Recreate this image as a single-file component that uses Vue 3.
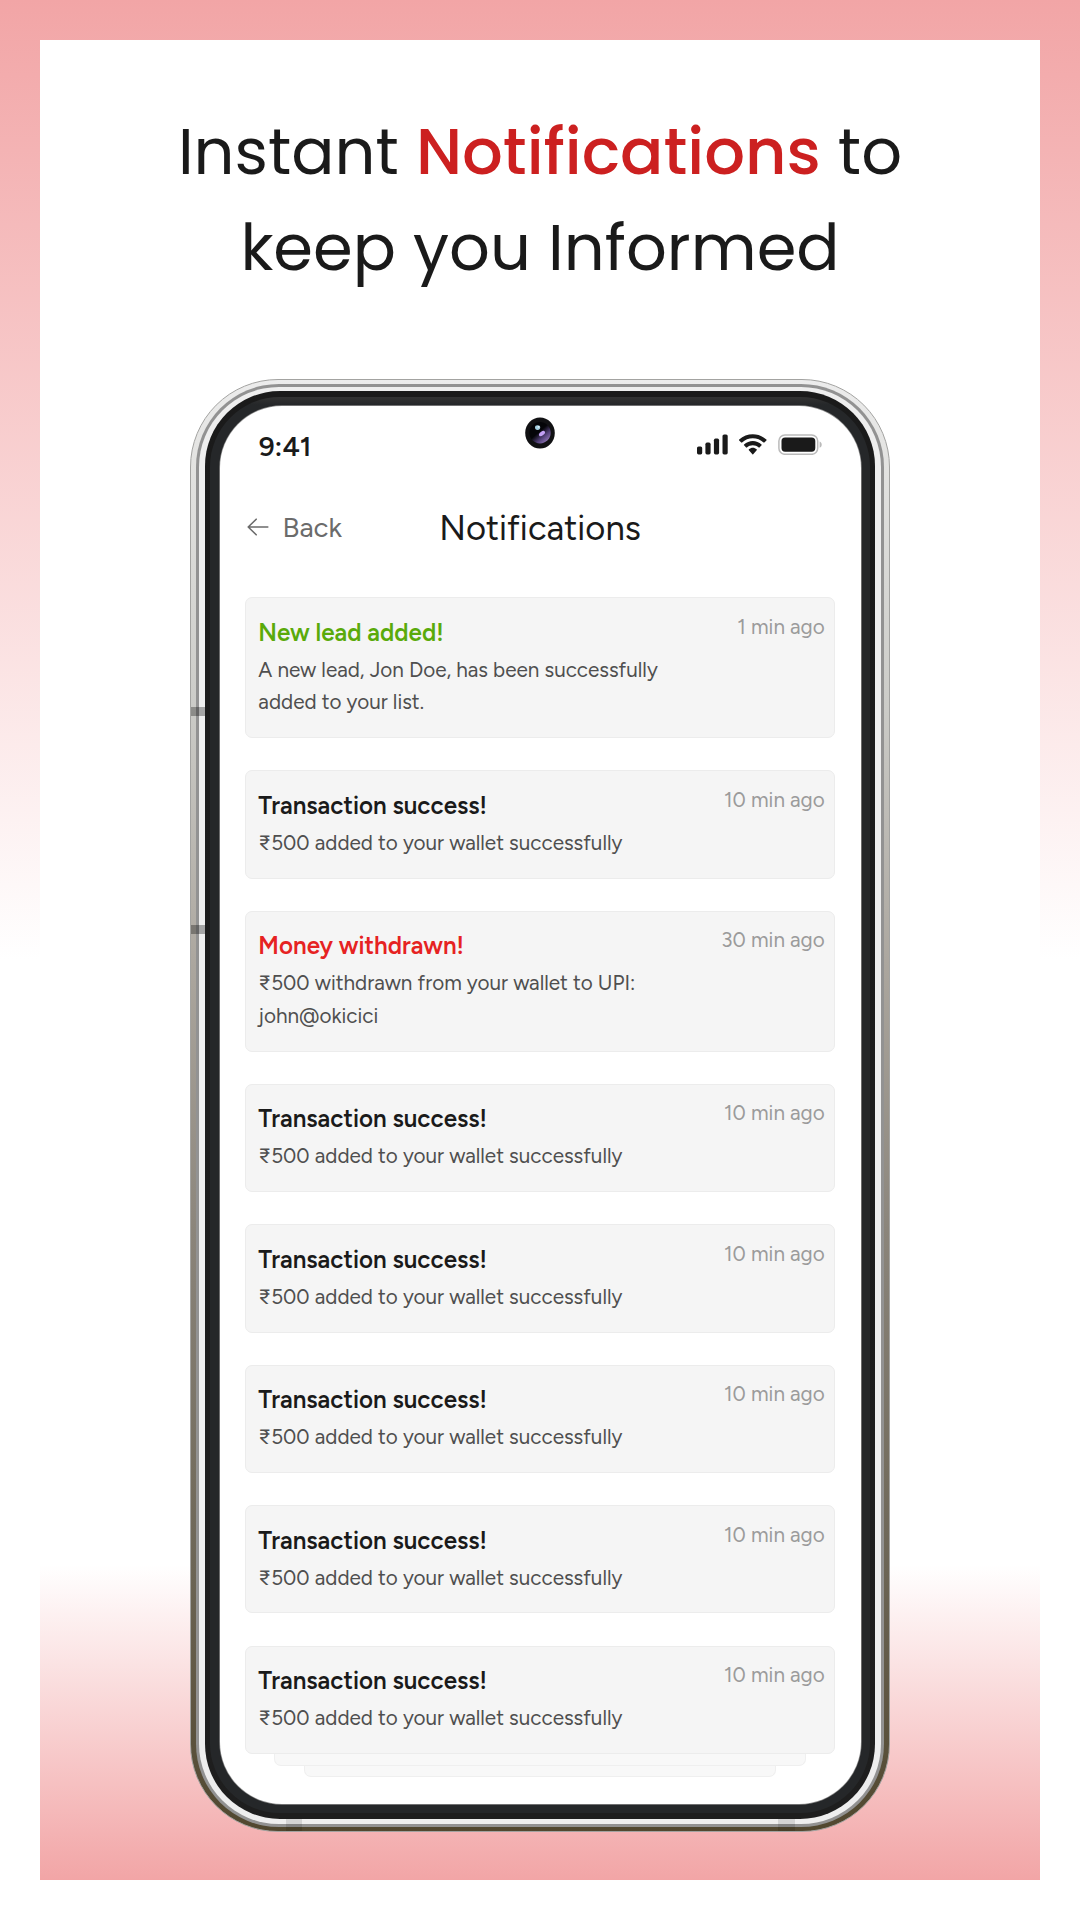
<script setup>
const success = { title: 'Transaction success!', body: '₹500 added to your wallet successfully', time: '10 min ago', tone: 'default' }

const notifications = [
  { title: 'New lead added!', body: 'A new lead, Jon Doe, has been successfully added to your list.', time: '1 min ago', tone: 'green' },
  { ...success },
  { title: 'Money withdrawn!', body: '₹500 withdrawn from your wallet to UPI: john@okicici', time: '30 min ago', tone: 'red' },
  ...Array.from({ length: 5 }, () => ({ ...success })),
]
</script>

<template>
  <div class="poster">
    <main class="panel">
      <h1 class="headline">Instant <span>Notifications</span> to<br />keep you Informed</h1>

      <div class="phone">
        <i class="band side first"></i>
        <i class="band side second"></i>
        <i class="band foot left"></i>
        <i class="band foot right"></i>
        <div class="groove">
          <div class="rail">
            <div class="bezel">
              <div class="glass">
                <div class="screen">
                  <svg class="camera" viewBox="0 0 30 32">
                    <defs>
                      <linearGradient id="lens" x1="0.2" y1="0.15" x2="0.85" y2="0.9">
                        <stop offset="0.4" stop-color="#050508" />
                        <stop offset="0.72" stop-color="#54427a" />
                        <stop offset="1" stop-color="#8f74b4" />
                      </linearGradient>
                    </defs>
                    <ellipse cx="15" cy="16" rx="14.8" ry="15.5" fill="#111113" />
                    <circle cx="15" cy="15.8" r="10.7" fill="url(#lens)" />
                    <ellipse cx="12.6" cy="10.6" rx="2.6" ry="2.4" fill="#a4d0e2" />
                    <circle cx="13.6" cy="9.8" r="0.9" fill="#eefaff" />
                    <ellipse cx="17" cy="16.6" rx="3.5" ry="1.9" transform="rotate(-38 17 16.6)" fill="#c3a0f4" />
                  </svg>

                  <div class="status">
                    <span class="clock">9:41</span>
                    <div class="indicators">
                      <svg width="31" height="21" viewBox="0 0 31 21" fill="#1a1a1a">
                        <rect x="0" y="12.4" width="5.2" height="8" rx="1.6" />
                        <rect x="8.4" y="8.6" width="5.2" height="11.8" rx="1.6" />
                        <rect x="16.9" y="4.6" width="5.2" height="15.8" rx="1.6" />
                        <rect x="25.5" y="0.4" width="5.2" height="20" rx="1.6" />
                      </svg>
                      <svg width="27.6" height="20.6" viewBox="0 -0.15 17.15 12.6" preserveAspectRatio="none" fill="#1a1a1a">
                        <path d="M8.57 2.47C11.06 2.47 13.45 3.39 15.25 5.04C15.39 5.17 15.6 5.17 15.74 5.04L17.04 3.77C17.1 3.71 17.14 3.62 17.14 3.53C17.14 3.43 17.1 3.35 17.03 3.28C12.3 -1.09 4.84 -1.09 0.11 3.28C0.04 3.35 0 3.43 0 3.53C0 3.62 0.04 3.71 0.1 3.77L1.4 5.04C1.54 5.17 1.75 5.17 1.89 5.04C3.69 3.39 6.08 2.47 8.57 2.47Z" />
                        <path d="M8.57 6.69C9.93 6.69 11.23 7.2 12.24 8.12C12.38 8.25 12.59 8.25 12.72 8.12L14.01 6.8C14.08 6.73 14.12 6.63 14.12 6.54C14.11 6.44 14.07 6.35 14.01 6.28C10.94 3.39 6.2 3.39 3.13 6.28C3.06 6.35 3.02 6.44 3.02 6.54C3.02 6.63 3.06 6.73 3.13 6.8L4.42 8.12C4.55 8.25 4.76 8.25 4.9 8.12C5.9 7.2 7.21 6.69 8.57 6.69Z" />
                        <path d="M11.09 9.48C11.09 9.59 11.06 9.69 10.99 9.76L8.81 12.22C8.75 12.29 8.66 12.33 8.57 12.33C8.48 12.33 8.39 12.29 8.33 12.22L6.15 9.76C6.09 9.69 6.05 9.59 6.05 9.48C6.05 9.37 6.09 9.28 6.16 9.21C7.55 7.9 9.59 7.9 10.98 9.21C11.05 9.28 11.09 9.37 11.09 9.48Z" />
                      </svg>
                      <svg width="44" height="21" viewBox="0 0 44 21">
                        <rect x="0.9" y="0.9" width="38.8" height="19.4" rx="6" fill="none" stroke="#bababa" stroke-width="1.5" />
                        <rect x="3.5" y="3.5" width="33.8" height="14.2" rx="3.6" fill="#1a1a1a" />
                        <path d="M41.6 7.6v6.2c1.3-.5 2.1-1.7 2.1-3.1s-.8-2.6-2.1-3.1z" fill="#bababa" />
                      </svg>
                    </div>
                  </div>

                  <header class="nav">
                    <a class="back">
                      <svg width="22" height="18" viewBox="0 0 22 18" fill="none" stroke="#6b6b6b" stroke-width="1.6" stroke-linecap="round" stroke-linejoin="round">
                        <path d="M20.8 9H1.2M9.2 1.2L1.2 9l8 7.8" />
                      </svg>
                      <span>Back</span>
                    </a>
                    <h2>Notifications</h2>
                  </header>

                  <section class="list">
                    <article v-for="(n, i) in notifications" :key="i" class="card" :class="n.tone">
                      <div class="text">
                        <h3>{{ n.title }}</h3>
                        <p>{{ n.body }}</p>
                      </div>
                      <time>{{ n.time }}</time>
                    </article>
                  </section>
                  <div class="stacked near"></div>
                  <div class="stacked far"></div>
                </div>
              </div>
            </div>
          </div>
        </div>
      </div>
    </main>
  </div>
</template>

<style>
body {
  margin: 0;
  background: #fff;
}
</style>

<style scoped>
* {
  box-sizing: border-box;
}

.poster {
  width: 1080px;
  height: 1920px;
  padding: 40px;
  overflow: hidden;
  background: linear-gradient(#f2a5a6 0, #fff 960px);
}

.panel {
  height: 1840px;
  display: flex;
  flex-direction: column;
  align-items: center;
  background: linear-gradient(#fff 1525px, #f2a5a6 1840px);
}

.headline {
  margin: 64px 0 0;
  height: 275px;
  font: 400 64px/96px Poppins, Inter, sans-serif;
  color: #1a1a1a;
  text-align: center;
  white-space: nowrap;
}

.headline span {
  font-weight: 500;
  color: #cc2020;
}

.phone {
  position: relative;
  width: 700px;
  height: 1452.5px;
  padding: 3.5px 5px;
  border: 1px solid #a3a3a1;
  border-radius: 88px;
  background: linear-gradient(#ececec 0, #e2e2e0 90px, #cbcbc7 330px, #aca79f 580px, #8b857b 850px, #6b6454 1200px, #51472f 1452px);
}

.groove {
  height: 100%;
  padding: 3px;
  border-radius: 83px;
  background: #929292;
}

.rail {
  height: 100%;
  padding: 4.5px 6px 5px;
  border-radius: 80px;
  background: #eeeeee;
}

.bezel {
  height: 100%;
  padding: 6px 5px;
  border-radius: 75px;
  background: linear-gradient(#1a1a1a, #1e1e1e);
}

.glass {
  height: 100%;
  padding: 9px 9.5px;
  border-radius: 70px;
  background: linear-gradient(#323232, #252729 8px);
}

.screen {
  position: relative;
  height: 100%;
  display: flex;
  flex-direction: column;
  align-items: center;
  border-radius: 62px;
  background: #fff;
  box-shadow: 0 0 0 0.7px #8a8a8a;
  font-family: Figtree, Inter, sans-serif;
}

.band {
  position: absolute;
  z-index: 1;
  background: rgba(0, 0, 0, 0.31);
}

.band.side {
  left: 0;
  width: 14px;
  height: 9px;
}

.band.first {
  top: 327px;
}

.band.second {
  top: 545px;
}

.band.foot {
  bottom: 0;
  width: 16.5px;
  height: 12px;
  background: rgba(0, 0, 0, 0.11);
}

.band.left {
  left: 94.5px;
}

.band.right {
  right: 94.5px;
}

.camera {
  position: absolute;
  top: 10.5px;
  left: 50%;
  width: 30px;
  height: 32px;
  margin-left: -15px;
}

.status {
  width: 100%;
  height: 72px;
  padding: 25px 38.5px 0 39.2px;
  display: flex;
  justify-content: space-between;
}

.clock {
  font-size: 27.7px;
  font-weight: 600;
  line-height: 32px;
  color: #1a1a1a;
}

.indicators {
  display: flex;
  gap: 11px;
  padding-top: 3px;
}

.nav {
  position: relative;
  width: 100%;
  height: 119.4px;
  padding-top: 30px;
}

.back {
  position: absolute;
  left: 27.5px;
  top: 28.5px;
  display: flex;
  align-items: center;
  gap: 13.5px;
  font-size: 27.7px;
  font-weight: 400;
  line-height: 40px;
  color: #6b6b6b;
}

.back span {
  padding-top: 1px;
}

.nav h2 {
  margin: 0;
  font-size: 34.6px;
  font-weight: 400;
  line-height: 40px;
  text-align: center;
  color: #1a1a1a;
}

.list {
  position: relative;
  z-index: 2;
  width: 590.5px;
  display: flex;
  flex-direction: column;
  gap: 32.4px;
}

.card {
  display: flex;
  justify-content: space-between;
  padding: 17.5px 9.5px 18.1px 12.6px;
  border: 1px solid #ececec;
  border-radius: 7px;
  background: #f5f5f5;
}

.text {
  width: 420px;
}

.card h3 {
  margin: 0 0 3.9px;
  font-size: 24.2px;
  font-weight: 600;
  line-height: 34px;
  color: #1a1a1a;
}

.card.green h3 {
  color: #5aaa0a;
}

.card.red h3 {
  color: #e62222;
}

.card p {
  margin: 0;
  font-size: 20.7px;
  line-height: 32.6px;
  color: #4f4f4f;
}

.card time {
  margin-top: -2px;
  font-size: 20.7px;
  line-height: 26px;
  color: #9b9b9b;
}

.stacked {
  border: 1px solid #efefef;
  border-top: 0;
  border-radius: 0 0 7px 7px;
  background: #f8f8f8;
}

.near {
  width: 531.5px;
  height: 12.4px;
}

.far {
  width: 472px;
  height: 11px;
}
</style>
